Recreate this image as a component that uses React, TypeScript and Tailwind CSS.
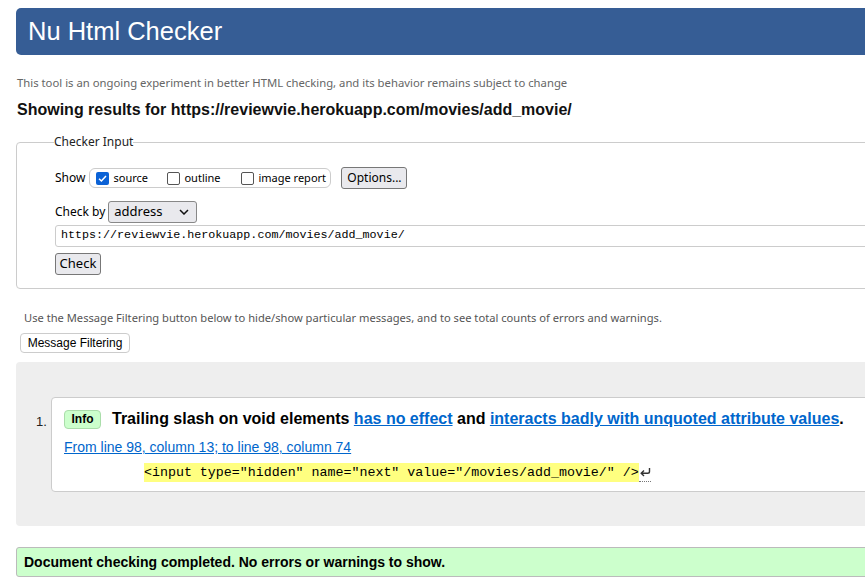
import React from "react";

const sans = "font-['Liberation_Sans',Arial,sans-serif]";
const ui = "font-['Noto_Sans','Open_Sans',sans-serif]";
const mono = "font-['Liberation_Mono','DejaVu_Sans_Mono',monospace]";

function Checkbox({ checked, label }: { checked?: boolean; label: string }) {
  return (
    <label className="flex items-center gap-[4px]">
      {checked ? (
        <span className="flex h-[13px] w-[13px] items-center justify-center rounded-[2px] bg-[#0b62d6]">
          <svg viewBox="0 0 12 12" className="h-[11px] w-[11px]">
            <path d="M2.2 6.3 4.8 8.8 9.8 3.2" fill="none" stroke="white" strokeWidth="1.6" />
          </svg>
        </span>
      ) : (
        <span className="h-[13px] w-[13px] rounded-[2px] border border-[#555] bg-white" />
      )}
      <span>{label}</span>
    </label>
  );
}

export default function App() {
  return (
    <div className="h-[587px] w-[865px] overflow-hidden bg-white text-black">
      <div className="w-[1000px] pl-[16px]">
        <div className={`mt-[8px] flex h-[47px] items-center rounded-[5px] bg-[#365d95] pl-[12px] text-[25.5px] text-white ${sans}`}>
          Nu Html Checker
        </div>

        <p className={`mt-[20px] pl-[1px] text-[11.3px] leading-[16px] text-[#666] ${ui}`}>
          This tool is an ongoing experiment in better HTML checking, and its behavior remains subject to change
        </p>
        <h2 className={`mt-[9px] pl-[1px] text-[16px] font-bold leading-[20px] text-[#111] ${sans}`}>
          Showing results for https://reviewvie.herokuapp.com/movies/add_movie/
        </h2>

        <fieldset className={`mt-[15px] h-[154px] rounded-[4px] border border-[#ccc] px-[38px] pt-[0px] text-[12px] ${ui}`}>
          <legend className="-ml-[1px] px-0 text-[12px] leading-[14px] text-[#222]">Checker Input</legend>

          <div className="mt-[18px] flex h-[22px] items-center">
            <span className="mr-[4px] text-[12px]">Show</span>
            <div className="flex h-[20px] w-[242px] items-center rounded-[6px] border border-[#ccc] pl-[6px] text-[11px]">
              <div className="w-[71px]">
                <Checkbox checked label="source" />
              </div>
              <div className="w-[74px]">
                <Checkbox label="outline" />
              </div>
              <Checkbox label="image report" />
            </div>
            <button className="ml-[10px] h-[22px] w-[66px] rounded-[3px] border border-[#777] bg-[#e9e9ed] text-[12px]">
              Options...
            </button>
          </div>

          <div className="mt-[12px] flex h-[22px] items-center">
            <span className="mr-[3px] text-[12px]">Check by</span>
            <div className="flex h-[22px] w-[89px] items-center justify-between rounded-[3px] border border-[#888] bg-[#e9e9ed] pl-[5px] pr-[7px] text-[13px]">
              <span>address</span>
              <svg viewBox="0 0 10 6" className="h-[6px] w-[10px]">
                <path d="M1 1 5 5 9 1" fill="none" stroke="#111" strokeWidth="1.5" />
              </svg>
            </div>
          </div>

          <div className={`mt-[2px] flex h-[22px] items-center rounded-[3px] border border-[#ccc] pl-[5px] text-[11.7px] ${mono}`}>
            https://reviewvie.herokuapp.com/movies/add_movie/
          </div>

          <button className="mt-[6px] h-[22px] w-[46px] rounded-[3px] border border-[#777] bg-[#e9e9ed] text-[13px]">
            Check
          </button>
        </fieldset>

        <p className={`mt-[22px] pl-[8px] text-[11.15px] leading-[14px] text-[#555] ${ui}`}>
          Use the Message Filtering button below to hide/show particular messages, and to see total counts of errors and warnings.
        </p>
        <button className={`ml-[4px] mt-[8px] h-[20px] w-[110px] rounded-[4px] border border-[#ccc] bg-white text-[12px] ${sans}`}>
          Message Filtering
        </button>

        <div className="mt-[9px] h-[164px] rounded-[4px] bg-[#eee] pt-[35px]">
          <div className="flex">
            <span className={`mt-[15px] w-[35px] pl-[20px] text-[13px] text-[#222] ${sans}`}>1.</span>
            <div className={`h-[95px] flex-1 rounded-[4px] border border-[#ccc] bg-white pl-[12px] ${sans}`}>
              <div className="mt-[9px] flex items-center">
                <span className="flex h-[19px] w-[37px] items-center justify-center rounded-[4px] border border-[#aaddaa] bg-[#ccffcc] text-[12px] font-bold">
                  Info
                </span>
                <span className="ml-[11px] text-[16px] font-bold">
                  Trailing slash on void elements{" "}
                  <a className="text-[#0066cc] underline">has no effect</a> and{" "}
                  <a className="text-[#0066cc] underline">interacts badly with unquoted attribute values</a>.
                </span>
              </div>
              <a className="mt-[7px] block text-[14px] leading-[18px] text-[#0066cc] underline">
                From line 98, column 13; to line 98, column 74
              </a>
              <div className={`mt-[7px] flex items-center pl-[80px] text-[13.3px] ${mono}`}>
                <span className="bg-[#ffff80] leading-[19px]">&lt;input type="hidden" name="next" value="/movies/add_movie/" /&gt;</span>
                <span className="flex h-[19px] w-[12px] items-center border-b border-dotted border-[#777]">
                  <svg viewBox="0 0 12 10" className="h-[10px] w-[12px]">
                    <path d="M10.5 1v3.5q0 1.8-1.8 1.8H2.5M5 3.5 2.2 6.3 5 9" fill="none" stroke="#333" strokeWidth="1.4" />
                  </svg>
                </span>
              </div>
            </div>
          </div>
        </div>

        <div className={`mt-[21px] flex h-[30px] items-center rounded-[3px] border border-[#bbb] bg-[#ccffcc] pl-[7px] text-[14px] font-bold ${sans}`}>
          Document checking completed. No errors or warnings to show.
        </div>
      </div>
    </div>
  );
}
